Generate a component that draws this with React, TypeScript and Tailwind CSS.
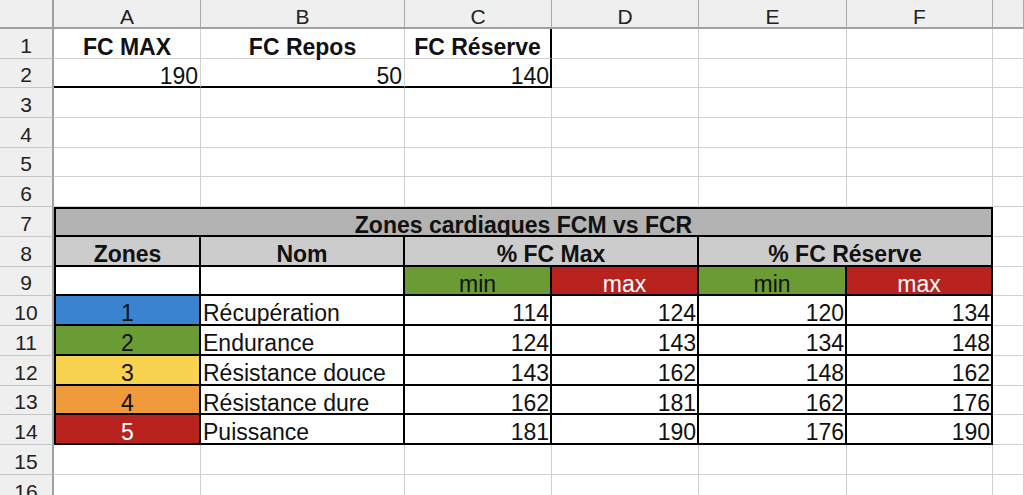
import React from "react";

const base = "flex items-center whitespace-nowrap leading-none pt-[7px] text-[23px] text-[#111]";
const g = "border-r border-b border-[#d0d0d0] bg-white";
const colHead = "flex items-center justify-center bg-[#efefef] border-r border-r-[#aaaaaa] border-b-2 border-b-[#a0a0a0] text-[21px] text-[#222] leading-none pt-[5px]";
const rowHead = "flex items-center justify-center bg-[#efefef] border-r-2 border-r-[#a0a0a0] border-b border-b-[#c4c4c4] text-[21px] text-[#222] leading-none pt-[3px]";

function Cell({ cls, children }: { cls: string; children?: React.ReactNode }) {
  return <div className={`${base} ${cls}`}>{children}</div>;
}

const zones = [
  { n: "1", name: "Récupération", v: ["114", "124", "120", "134"], bg: "bg-[#3a83d0]", tc: "text-[#111]" },
  { n: "2", name: "Endurance", v: ["124", "143", "134", "148"], bg: "bg-[#6a9b35]", tc: "text-[#111]" },
  { n: "3", name: "Résistance douce", v: ["143", "162", "148", "162"], bg: "bg-[#f7d34f]", tc: "text-[#111]" },
  { n: "4", name: "Résistance dure", v: ["162", "181", "162", "176"], bg: "bg-[#f09a3c]", tc: "text-[#111]" },
  { n: "5", name: "Puissance", v: ["181", "190", "176", "190"], bg: "bg-[#b8221e]", tc: "text-white" },
];

const tbl = "border-r-2 border-b-2 border-black";

export default function App() {
  const emptyRow = (r: number) => (
    <React.Fragment key={`e${r}`}>
      <div className={rowHead}>{r}</div>
      <Cell cls={g} />
      <Cell cls={g} />
      <Cell cls={g} />
      <Cell cls={g} />
      <Cell cls={g} />
      <Cell cls={g} />
      <Cell cls={g} />
    </React.Fragment>
  );

  return (
    <div className="w-[1024px] h-[495px] overflow-hidden bg-white font-['Liberation_Sans',Arial,sans-serif]">
      <div className="grid grid-cols-[54px_147px_204px_147px_147px_148px_146px_1fr] grid-rows-[29px_30px_29px_30px_30px_29px_30px_30px_30px_29px_30px_30px_30px_29px_30px_30px_30px]">
        {/* header */}
        <div className="bg-[#efefef] border-r-2 border-r-[#a0a0a0] border-b-2 border-b-[#a0a0a0]" />
        {["A", "B", "C", "D", "E", "F", ""].map((l, i) => (
          <div key={i} className={colHead}>{l}</div>
        ))}

        {/* row 1 */}
        <div className={rowHead}>1</div>
        <Cell cls={`${g} justify-center font-bold`}>FC MAX</Cell>
        <Cell cls={`${g} justify-center font-bold`}>FC Repos</Cell>
        <Cell cls="border-r-2 border-r-black border-b border-b-[#d0d0d0] justify-center font-bold">FC Réserve</Cell>
        <Cell cls={g} />
        <Cell cls={g} />
        <Cell cls={g} />
        <Cell cls={g} />

        {/* row 2 */}
        <div className={rowHead}>2</div>
        <Cell cls="border-r border-r-[#d0d0d0] border-b-2 border-b-black justify-end pr-[2px]">190</Cell>
        <Cell cls="border-r border-r-[#d0d0d0] border-b-2 border-b-black justify-end pr-[2px]">50</Cell>
        <Cell cls={`${tbl} justify-end pr-[1px]`}>140</Cell>
        <Cell cls={g} />
        <Cell cls={g} />
        <Cell cls={g} />
        <Cell cls={g} />

        {[3, 4, 5, 6].map((r) => emptyRow(r))}

        {/* row 7 */}
        <div className={rowHead}>7</div>
        <Cell cls="col-span-6 border-2 border-black bg-[#b3b3b3] justify-center font-bold">Zones cardiaques FCM vs FCR</Cell>
        <Cell cls={g} />

        {/* row 8 */}
        <div className={rowHead}>8</div>
        <Cell cls={`${tbl} border-l-2 bg-[#cccccc] justify-center font-bold`}>Zones</Cell>
        <Cell cls={`${tbl} bg-[#cccccc] justify-center font-bold`}>Nom</Cell>
        <Cell cls={`${tbl} col-span-2 bg-[#cccccc] justify-center font-bold`}>% FC Max</Cell>
        <Cell cls={`${tbl} col-span-2 bg-[#cccccc] justify-center font-bold`}>% FC Réserve</Cell>
        <Cell cls={g} />

        {/* row 9 */}
        <div className={rowHead}>9</div>
        <Cell cls={`${tbl} border-l-2 bg-white`} />
        <Cell cls={`${tbl} bg-white`} />
        <Cell cls={`${tbl} bg-[#6a9b35] justify-center`}>min</Cell>
        <Cell cls={`${tbl} bg-[#b8221e] justify-center text-white`}>max</Cell>
        <Cell cls={`${tbl} bg-[#6a9b35] justify-center`}>min</Cell>
        <Cell cls={`${tbl} bg-[#b8221e] justify-center text-white`}>max</Cell>
        <Cell cls={g} />

        {zones.map((z, i) => (
          <React.Fragment key={z.n}>
            <div className={rowHead}>{10 + i}</div>
            <Cell cls={`${tbl} border-l-2 ${z.bg} justify-center ${z.tc}`}>{z.n}</Cell>
            <Cell cls={`${tbl} bg-white pl-[2px]`}>{z.name}</Cell>
            {z.v.map((v, j) => (
              <Cell key={j} cls={`${tbl} bg-white justify-end pr-[1px]`}>{v}</Cell>
            ))}
            <Cell cls={g} />
          </React.Fragment>
        ))}

        {[15, 16].map((r) => emptyRow(r))}
      </div>
    </div>
  );
}
